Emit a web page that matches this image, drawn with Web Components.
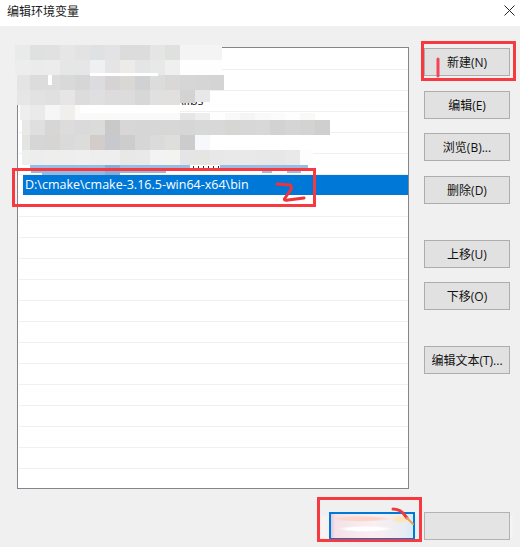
<!DOCTYPE html>
<html lang="zh">
<head>
<meta charset="utf-8">
<title>编辑环境变量</title>
<style>
  html, body { margin: 0; padding: 0; background: #f0f0f0; }
  body { font-family: "Open Sans", "Noto Sans CJK SC", sans-serif; }
</style>
</head>
<body>
<env-dialog>
  <span slot="title">编辑环境变量</span>
  <path-list slot="list">
    <path-row></path-row>
    <path-row></path-row>
    <path-row indent="160">\libs</path-row>
    <path-row></path-row>
    <path-row></path-row>
    <path-row></path-row>
    <path-row selected>D:\cmake\cmake-3.16.5-win64-x64\bin</path-row>
    <path-row></path-row><path-row></path-row><path-row></path-row><path-row></path-row>
    <path-row></path-row><path-row></path-row><path-row></path-row><path-row></path-row>
    <path-row></path-row><path-row></path-row><path-row></path-row><path-row></path-row>
    <path-row></path-row>
  </path-list>
  <win-button slot="actions">新建(N)</win-button>
  <win-button slot="actions" style="margin-top:15px">编辑(E)</win-button>
  <win-button slot="actions" style="margin-top:14px">浏览(B)...</win-button>
  <win-button slot="actions" style="margin-top:15px">删除(D)</win-button>
  <win-button slot="actions" style="margin-top:36px">上移(U)</win-button>
  <win-button slot="actions" style="margin-top:14px">下移(O)</win-button>
  <win-button slot="actions" style="margin-top:36px">编辑文本(T)...</win-button>
  <win-button slot="footer" primary><smear-patch></smear-patch></win-button>
  <win-button slot="footer" muted></win-button>
  <mosaic-patch slot="overlay"></mosaic-patch>
  <annotation-layer slot="overlay"></annotation-layer>
</env-dialog>

<script>
const dialogTemplate = document.createElement('template');
dialogTemplate.innerHTML = `
  <style>
    :host {
      display: block;
      position: relative;
      width: 520px;
      height: 547px;
      overflow: hidden;
      background: #f0f0f0;
      color: #000;
    }
    .titlebar {
      box-sizing: border-box;
      height: 26px;
      background: #fff;
      display: flex;
      align-items: flex-start;
      justify-content: space-between;
      padding: 2px 5px 0 7px;
      font-size: 12px;
      color: #1a1a1a;
    }
    .close { display: block; width: 11px; height: 11px; margin-top: 3px; }
    .body {
      display: flex;
      gap: 15px;
      padding: 21px 10px 0 17px;
    }
    .actions {
      display: flex;
      flex-direction: column;
      padding-top: 1px;
    }
    .footer {
      display: flex;
      justify-content: flex-end;
      gap: 9px;
      padding: 23px 10px 0 0;
    }
  </style>
  <div class="titlebar">
    <slot name="title"></slot>
    <svg class="close" viewBox="0 0 11 11" fill="none" stroke="#222" stroke-width="1">
      <path d="M.5.5l10 10M10.500.5l-10 10"/>
    </svg>
  </div>
  <div class="body">
    <slot name="list"></slot>
    <div class="actions"><slot name="actions"></slot></div>
  </div>
  <div class="footer"><slot name="footer"></slot></div>
  <slot name="overlay"></slot>
`;

class EnvDialog extends HTMLElement {
  constructor() {
    super();
    this.attachShadow({ mode: 'open' });
    this.shadowRoot.appendChild(dialogTemplate.content.cloneNode(true));
  }
}

const listTemplate = document.createElement('template');
listTemplate.innerHTML = `
  <style>
    :host {
      display: block;
      box-sizing: border-box;
      width: 392px;
      height: 442px;
      padding-top: 1px;
      background: #fff;
      border: 1px solid #82868c;
      overflow: hidden;
    }
  </style>
  <slot></slot>
`;

class PathList extends HTMLElement {
  constructor() {
    super();
    this.attachShadow({ mode: 'open' });
    this.shadowRoot.appendChild(listTemplate.content.cloneNode(true));
  }
}

const rowTemplate = document.createElement('template');
rowTemplate.innerHTML = `
  <style>
    :host {
      display: block;
      box-sizing: border-box;
      height: 21px;
      margin-left: 1px;
      border-bottom: 1px solid #f0f0f0;
      font-size: 12.5px;
      line-height: 20px;
      white-space: nowrap;
      color: #222;
    }
    :host([selected]) {
      margin-left: 5px;
      border-bottom-color: #fff;
      background: #0078d7;
      color: #fff;
    }
    .label { display: block; padding-left: 2px; }
  </style>
  <span class="label"><slot></slot></span>
`;

class PathRow extends HTMLElement {
  constructor() {
    super();
    this.attachShadow({ mode: 'open' });
    this.shadowRoot.appendChild(rowTemplate.content.cloneNode(true));
  }

  connectedCallback() {
    const indent = this.getAttribute('indent');
    if (indent) this.shadowRoot.querySelector('.label').style.paddingLeft = `${indent}px`;
  }
}

const buttonTemplate = document.createElement('template');
buttonTemplate.innerHTML = `
  <style>
    :host {
      display: flex;
      align-items: center;
      justify-content: center;
      box-sizing: border-box;
      width: 86px;
      height: 28px;
      background: #e1e1e1;
      border: 1px solid #adadad;
      font-size: 12px;
      color: #111;
      white-space: nowrap;
      overflow: hidden;
    }
    :host([primary]) { border: 2px solid #0078d7; align-items: stretch; justify-content: stretch; }
    :host([muted]) { background: #e4e4e4; border-color: #b2b2b2; }
  </style>
  <slot></slot>
`;

class WinButton extends HTMLElement {
  constructor() {
    super();
    this.attachShadow({ mode: 'open' });
    this.shadowRoot.appendChild(buttonTemplate.content.cloneNode(true));
  }
}

const smearTemplate = document.createElement('template');
smearTemplate.innerHTML = `
  <style>
    :host {
      display: block;
      flex: 1;
      background:
        radial-gradient(ellipse 28px 3px at 42% 62%, #fff 60%, transparent),
        radial-gradient(ellipse 32px 3px at 36% 20%, #f9d5cb 55%, transparent),
        radial-gradient(ellipse 10px 4px at 84% 22%, #fde5b8 40%, transparent),
        linear-gradient(90deg, #d8c8e2 0, #f3e2e8 5%, #fbeef2 50%, #e9edf2 90%, #d6ecf6);
    }
  </style>
`;

class SmearPatch extends HTMLElement {
  constructor() {
    super();
    this.attachShadow({ mode: 'open' });
    this.shadowRoot.appendChild(smearTemplate.content.cloneNode(true));
  }
}

// pixelated block over the hidden entries: [left, top, cells], a cell is colour or colour*width or colour*width*height
const MOSAIC_ROWS = [
  [15, 45, 'e9ebea dfe0e0 e1e1e1 e6e6e6 e3e3e3 e0e1e3 e3e3e5 dcdcdc dcdcdc e5e5e5 dfe1df f3f4f3*42'],
  [15, 60, 'ededed ebebeb ececec e4e7e6 e5e6e5 eff0f2 e5e5e5 ecebe8 e3e5e7 e8e8e8 efefef fefefe*42'],
  [17, 75, 'e4e4e4*13 dcdcdc dcdcdc d9d9d9 d6d6d6 dcdcdf d5d3d3 d9d8d5 cfd1d3 dcdcdc d9d8d6 d6d6d6 d5d5d5 d4d4d4*14'],
  [17, 90, 'e6e6e6*13 e2e2e2 e0e0e0 e6e6e6 dcdcdc dfdfe1 dddbdc dcdcdc d7d7d7 e0e0e0 e1e0de d3d3d3*15*13 e8e8e8*15*12'],
  [20, 105, 'eeeeee*10 eaeaea f6f6f6 f0efec fafafa*105'],
  [180, 113, 'e6e6e6*15*7 eeeeee*15*7 fefefe*15*7 f9f9f9*15*7 f5f5f5*15*7 f9f9f9*15*7 fbfbfb*15*7 fefefe*15*7 f9f9f9*15*7'],
  [22, 120, 'e8e8e8*8 dfdfdf d6d6d6 dcdcdc dadada dbdbda c9c9c9 d8d6d7 d6d6d6 d7d7d7 d7d7d7 d6d6d6 d8d8d8 d8d8d8 d6d6d4 d7d7d7 d8d8d8 d2d2d2 d5d5d5 d3d3d1 cfcfcf'],
  [22, 135, 'e4e4e3*8 d6d6d6 d6d5d3 dadada dcdcda d2cdcb c8c8cf cdcdcd d6d6d6 dbdbdb dededc cdcccc f6f8fb'],
  [22, 150, 'edeeee*8 ededed eeeeed eeeeee eeefee eeeeee eeeeee e8e8e6 e9e9e9 f3f3f3 f3f3f0 e5e4e6 e5e5e2 e8e8e8 e9e9e9 e9e9e9 e8e8e8 e7e7e7 e9e9e9 fdfdfd*13'],
  [30, 165, '97bde2*75*4 86acd8*15*4 97bde2*70*4 ffffff*30*3 97bde2*88*3'],
  [31, 171, '93b9e0*74*2 86acd8*15*2 93b9e0*46*2'],
  [42, 173, '93b9e0*63*2 86acd8*15*2'],
  [262, 171, '97bde2*10*2 ffffff*15*2 97bde2*14*2']
];

const mosaicTemplate = document.createElement('template');
mosaicTemplate.innerHTML = `
  <style>
    :host { position: absolute; left: 0; top: 0; display: block; }
    .row { position: absolute; display: flex; align-items: flex-start; height: 15px; }
    .cell { flex: none; }
    .strip { position: absolute; background: #fff; }
    .specks {
      position: absolute;
      background: repeating-linear-gradient(90deg, #333 0 1px, transparent 1px 5px);
    }
    .bleed { position: absolute; }
  </style>
`;

class MosaicPatch extends HTMLElement {
  constructor() {
    super();
    this.attachShadow({ mode: 'open' });
    this.shadowRoot.appendChild(mosaicTemplate.content.cloneNode(true));
  }

  connectedCallback() {
    MOSAIC_ROWS.forEach(([left, top, cells]) => {
      const row = document.createElement('div');
      row.className = 'row';
      row.style.left = `${left}px`;
      row.style.top = `${top}px`;
      cells.split(' ').forEach((cell) => {
        const [colour, width = 15, height = 15] = cell.split('*');
        const box = document.createElement('div');
        box.className = 'cell';
        box.style.cssText = `background:#${colour};width:${width}px;height:${height}px`;
        row.appendChild(box);
      });
      this.shadowRoot.appendChild(row);
    });
    // white slivers left by the retouching
    [[90, 73, 68, 3], [48, 75, 4, 10], [80, 105, 100, 8]].forEach(([x, y, w, h]) => {
      const strip = document.createElement('div');
      strip.className = 'strip';
      strip.style.cssText = `left:${x}px;top:${y}px;width:${w}px;height:${h}px`;
      this.shadowRoot.appendChild(strip);
    });
    const specks = document.createElement('div');
    specks.className = 'specks';
    specks.style.cssText = 'left:193px;top:166px;width:26px;height:2px';
    this.shadowRoot.appendChild(specks);
    // the smear of the hidden button runs past its edges
    [
      ['316px', '13px', 'linear-gradient(90deg,#f0f0f0,#fbf3f3 50%,#f6f0f4)'],
      ['415px', '9px', 'linear-gradient(90deg,#d9f0f8,#f9eeee 50%,#f0f0f0)'],
      ['510px', '4px', 'linear-gradient(90deg,#f6f6f6,#f0f0f0)']
    ].forEach(([left, width, background]) => {
      const bleed = document.createElement('div');
      bleed.className = 'bleed';
      bleed.style.cssText = `left:${left};top:516px;width:${width};height:22px;background:${background}`;
      this.shadowRoot.appendChild(bleed);
    });
  }
}

const annotationTemplate = document.createElement('template');
annotationTemplate.innerHTML = `
  <style>
    :host { position: absolute; left: 0; top: 0; display: block; width: 520px; height: 547px; pointer-events: none; }
    svg { display: block; }
  </style>
  <svg width="520" height="547" viewBox="0 0 520 547" fill="none" stroke="#f73a3f" stroke-width="3">
    <rect x="422.500" y="42.500" width="92" height="37"/>
    <rect x="13.500" y="169.500" width="301" height="36"/>
    <rect x="318.500" y="498.500" width="102" height="42"/>
    <path d="M438 59v17" stroke="#f4465a" stroke-linecap="round"/>
    <path d="M277 184l13 1q3 2 0 6l-5 7q-2 3 3 2l16-2" stroke="#f0323a" stroke-linecap="round" stroke-linejoin="round"/>
    <path d="M393 509q6 0 10 4l4 5" stroke="#ee3a3a" stroke-linecap="round"/>
    <path d="M407 518l6 6" stroke="#f0a050" stroke-width="2" stroke-linecap="round"/>
  </svg>
`;

class AnnotationLayer extends HTMLElement {
  constructor() {
    super();
    this.attachShadow({ mode: 'open' });
    this.shadowRoot.appendChild(annotationTemplate.content.cloneNode(true));
  }
}

customElements.define('env-dialog', EnvDialog);
customElements.define('path-list', PathList);
customElements.define('path-row', PathRow);
customElements.define('win-button', WinButton);
customElements.define('smear-patch', SmearPatch);
customElements.define('mosaic-patch', MosaicPatch);
customElements.define('annotation-layer', AnnotationLayer);
</script>
</body>
</html>
